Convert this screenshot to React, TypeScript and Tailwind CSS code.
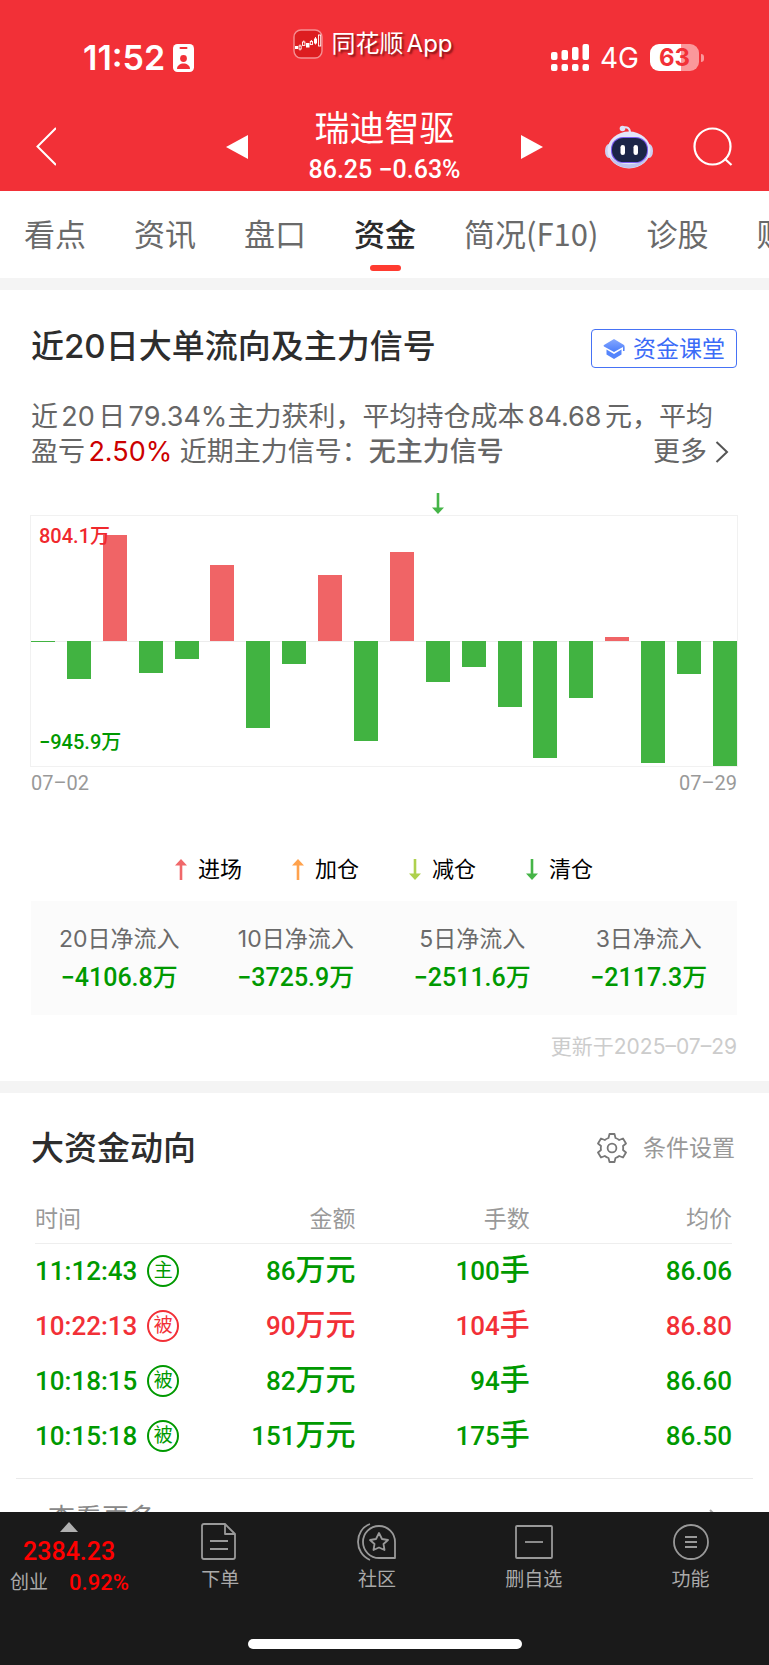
import type { ReactNode } from "react";

const tabs = ["看点", "资讯", "盘口", "资金", "简况(F10)", "诊股", "财务"];

const flujo = [
  -2, -288, 804.1, -243, -136, 575, -658, -174, 497, -760, 673, -314, -197,
  -496, -885, -428, 30, -923, -250, -945.9,
];
const maxFlujo = 945.9;

const leyenda = [
  { label: "进场", color: "#f0686a", up: true },
  { label: "加仓", color: "#ffa24d", up: true },
  { label: "减仓", color: "#aed14e", up: false },
  { label: "清仓", color: "#46b548", up: false },
];

const netos = [
  { label: "20日净流入", valor: "−4106.8万" },
  { label: "10日净流入", valor: "−3725.9万" },
  { label: "5日净流入", valor: "−2511.6万" },
  { label: "3日净流入", valor: "−2117.3万" },
];

const ordenes = [
  { hora: "11:12:43", tipo: "主", monto: "86", lotes: "100", precio: "86.06", sube: false },
  { hora: "10:22:13", tipo: "被", monto: "90", lotes: "104", precio: "86.80", sube: true },
  { hora: "10:18:15", tipo: "被", monto: "82", lotes: "94", precio: "86.60", sube: false },
  { hora: "10:15:18", tipo: "被", monto: "151", lotes: "175", precio: "86.50", sube: false },
];

function Flecha({ color, up }: { color: string; up: boolean }) {
  return (
    <svg viewBox="0 0 12 21" className={up ? "w-3 h-[21px]" : "w-3 h-[21px] rotate-180"} fill={color} aria-hidden="true">
      <path d="M6 0 L12 6.5 H7.3 V21 H4.7 V6.5 H0 Z" />
    </svg>
  );
}

function StatusBar() {
  return (
    <div className="flex items-start justify-between pl-[83px] pr-[65px] pt-7 h-[100px]">
      <div className="flex items-center gap-2 pt-[9px]">
        <span className="text-[34px] leading-[42px] font-semibold">11:52</span>
        <svg viewBox="0 0 21 28" className="w-[21px] h-7" aria-hidden="true">
          <rect width="21" height="28" rx="4.5" fill="#fff" />
          <rect x="6.5" y="3" width="8" height="2" rx="1" fill="#f23037" />
          <circle cx="10.5" cy="14.5" r="3.4" fill="#f23037" />
          <path d="M4 25 C4 17.6 17 17.6 17 25 Z" fill="#f23037" />
        </svg>
      </div>
      <div className="flex items-center gap-[9px]">
        <svg viewBox="0 0 30 30" className="w-[30px] h-[30px]" aria-hidden="true">
          <rect x="1" y="1" width="28" height="28" rx="7" fill="#dd1d20" stroke="#f58f92" strokeWidth="1.4" />
          <g fill="#fff">
            <rect x="2" y="17" width="3" height="3" />
            <rect x="13" y="14" width="3.5" height="4.5" />
            <rect x="21" y="9.5" width="3" height="5" />
          </g>
          <g fill="none" stroke="#fff" strokeWidth="0.9">
            <rect x="6" y="17" width="2.2" height="3" />
            <path d="M7 15.5 V17 M7 20 V21.5 M18.4 11 V12.5 M10.8 11.5 V13 M22.5 8 V15.5" />
            <rect x="9.5" y="13" width="2.4" height="3.4" />
            <rect x="17.3" y="12.4" width="2.2" height="3.2" />
            <rect x="25.5" y="6" width="2.2" height="11" />
          </g>
        </svg>
        <span className="text-2xl leading-8 [text-autospace:normal] [text-shadow:2px_2px_2px_rgba(60,0,0,0.6)]">同花顺App</span>
      </div>
      <div className="flex items-center gap-[11px] pt-[9px] h-[50px]">
        <svg viewBox="0 0 38 27" className="w-[38px] h-[27px]" fill="#fff" aria-hidden="true">
          <rect x="0" y="8" width="6.5" height="8" rx="2" />
          <rect x="10.5" y="6" width="6.5" height="10" rx="2" />
          <rect x="21" y="3" width="6.5" height="13" rx="2" />
          <rect x="31.5" y="0" width="6.5" height="16" rx="2" />
          <rect x="0" y="20" width="6.5" height="7" rx="2" />
          <rect x="10.5" y="20" width="6.5" height="7" rx="2" />
          <rect x="21" y="20" width="6.5" height="7" rx="2" />
          <rect x="31.5" y="20" width="6.5" height="7" rx="2" />
        </svg>
        <span className="text-[28px] leading-9">4G</span>
        <div className="flex items-center gap-[2px]">
          <div className="w-[49px] h-[27px] rounded-[9px] bg-linear-to-r from-white from-63% to-[#fa989b] to-63% text-center text-[#f23037] text-2xl leading-[27px] font-bold">
            63
          </div>
          <div className="w-[3px] h-[8px] rounded-r-full bg-[#fa989b]" />
        </div>
      </div>
    </div>
  );
}

function Robot() {
  return (
    <svg viewBox="0 0 48 44" className="w-12 h-11" aria-hidden="true">
      <path d="M17 3.2 C22 1 25 3 25 8" fill="none" stroke="#dfe2f8" strokeWidth="2" />
      <circle cx="17.5" cy="3.5" r="2.8" fill="#dfe2f8" />
      <ellipse cx="4" cy="26" rx="4" ry="7" fill="#cdd0f0" />
      <ellipse cx="44" cy="26" rx="4" ry="7" fill="#cdd0f0" />
      <ellipse cx="24" cy="25" rx="21.5" ry="18.5" fill="#e3e5fa" />
      <path d="M5 31 C10 47 38 47 43 31 C36 42 12 42 5 31 Z" fill="#bfc3ee" />
      <rect x="6" y="12" width="37" height="26" rx="12" fill="#7a5cf0" />
      <rect x="7" y="13" width="35" height="24" rx="11.5" fill="#1b2547" />
      <rect x="15.5" y="20" width="4.5" height="10" rx="2.2" fill="#fff" />
      <rect x="28.5" y="20" width="4.5" height="10" rx="2.2" fill="#fff" />
    </svg>
  );
}

function Cabecera() {
  return (
    <header className="bg-[#f23037] text-white">
      <StatusBar />
      <div className="grid grid-cols-[1fr_auto_1fr] items-center px-9 pt-[2px] h-[91px]">
        <button aria-label="返回" className="w-5 h-[39px]">
          <svg viewBox="0 0 20 39" className="w-5 h-[39px]" fill="none" stroke="#fff" strokeWidth="2">
            <path d="M20 1 L1.5 19.5 L20 38" />
          </svg>
        </button>
        <div className="flex items-center gap-[60px]">
          <button aria-label="上一只">
            <svg viewBox="0 0 22 24" className="w-[22px] h-6" fill="#fff"><path d="M22 0 V24 L0 12 Z" /></svg>
          </button>
          <div className="text-center">
            <h1 className="text-[35px] leading-[46px]">瑞迪智驱</h1>
            <p className="font-['Roboto','Noto_Sans_CJK_SC',sans-serif] text-[25px] leading-[38px] font-medium">86.25 −0.63%</p>
          </div>
          <button aria-label="下一只">
            <svg viewBox="0 0 22 24" className="w-[22px] h-6" fill="#fff"><path d="M0 0 V24 L22 12 Z" /></svg>
          </button>
        </div>
        <div className="flex items-center justify-end gap-10">
          <button aria-label="智能助手"><Robot /></button>
          <button aria-label="搜索">
            <svg viewBox="0 0 40 39" className="w-10 h-[39px]" fill="none" stroke="#fff" strokeWidth="2.2">
              <circle cx="19.5" cy="19.5" r="18" />
              <path d="M31.5 31.5 L38.5 38" />
            </svg>
          </button>
        </div>
      </div>
    </header>
  );
}

function Tabs() {
  return (
    <nav className="flex gap-12 pl-6 pt-5 h-[87px] overflow-hidden">
      {tabs.map((t) => (
        <button
          key={t}
          className={
            t === "资金"
              ? "shrink-0 flex flex-col items-center text-[31px] leading-[44px] font-medium text-[#2b2b2b]"
              : "shrink-0 flex flex-col items-center text-[31px] leading-[44px] text-[#6a6a6a]"
          }
        >
          <span className="font-['Noto_Sans_CJK_SC',sans-serif]">{t}</span>
          {t === "资金" && <span className="mt-[10px] w-[31px] h-[6px] rounded-full bg-[#ff3b30]" />}
        </button>
      ))}
    </nav>
  );
}

function Grafico() {
  return (
    <div className="mt-6">
      <div className="flex justify-between h-[23px]">
        {flujo.map((_, i) => (
          <div key={i} className="w-6 flex justify-center">
            {i === 11 && <Flecha color="#46b548" up={false} />}
          </div>
        ))}
      </div>
      <div className="relative h-[250px] outline outline-[#f1f1f1]">
        <div className="absolute inset-x-0 top-1/2 h-px bg-[#ececec]" />
        <div className="relative flex justify-between h-full">
          {flujo.map((v, i) => (
            <div key={i} className="w-6 grid grid-rows-2">
              <div className="flex items-end">
                {v > 0 && <div className="w-full bg-[#f06466]" style={{ height: `${(v / maxFlujo) * 100}%` }} />}
              </div>
              <div>
                {v < 0 && <div className="w-full bg-[#41b341]" style={{ height: `${(-v / maxFlujo) * 100}%` }} />}
              </div>
            </div>
          ))}
        </div>
        <span className="absolute left-2 top-[6px] font-['Roboto','Noto_Sans_CJK_SC',sans-serif] text-xl leading-7 font-medium text-[#f0282d]">804.1万</span>
        <span className="absolute left-2 bottom-[10px] font-['Roboto','Noto_Sans_CJK_SC',sans-serif] text-xl leading-7 font-medium text-[#090]">−945.9万</span>
      </div>
      <div className="flex justify-between mt-[3px] font-['Roboto',sans-serif] text-xl leading-7 text-[#999]">
        <span>07–02</span>
        <span>07–29</span>
      </div>
    </div>
  );
}

function FlujoPrincipal() {
  return (
    <section className="pl-[31px] pr-8 pt-[39px] pb-[18px] border-t-12 border-[#f4f4f4]">
      <div className="flex items-start justify-between h-[39px]">
        <h2 className="text-[33px] leading-[35px] font-medium text-[#2d2d2d]">近20日大单流向及主力信号</h2>
        <a href="#ketang" className="flex items-center gap-2 h-[39px] px-[11px] border border-[#4672f5] rounded text-[23px] leading-9 text-[#3b6bf7]">
          <svg viewBox="0 0 22 20" className="w-[22px] h-5" aria-hidden="true">
            <defs>
              <linearGradient id="gorro" x1="0" y1="0" x2="0" y2="1">
                <stop offset="0" stopColor="#86a8ff" />
                <stop offset="1" stopColor="#4a7dfb" />
              </linearGradient>
            </defs>
            <path fill="url(#gorro)" d="M11 0 L21 6 Q22 7 21.5 12 L20 12 L20 8 L11 13 L1 7.5 Q0 6.8 1 6 Z" />
            <path fill="#5585fc" d="M3.5 10.5 L11 15 L18.5 10.5 V15.5 L11 20 L3.5 15.5 Z" />
          </svg>
          资金课堂
        </a>
      </div>

      <div className="mt-[31px] text-[27px] leading-[35px] text-[#666] [text-autospace:normal]">
        <p>近20日79.34%主力获利，平均持仓成本84.68元，平均</p>
        <div className="flex justify-between">
          <p>
            盈亏<span className="text-[#c00]">2.50%</span> 近期主力信号：<b className="font-medium">无主力信号</b>
          </p>
          <a href="#more" className="flex items-center gap-2 pr-2">
            更多
            <svg viewBox="0 0 14 22" className="w-[14px] h-[22px]" fill="none" stroke="#555" strokeWidth="2" aria-hidden="true">
              <path d="M1.5 1 L12 11 L1.5 21" />
            </svg>
          </a>
        </div>
      </div>

      <Grafico />

      <div className="mt-[56px] flex justify-center gap-[50px]">
        {leyenda.map((l) => (
          <div key={l.label} className="flex items-center gap-[11px] text-[22px] leading-8 text-black">
            <Flecha color={l.color} up={l.up} />
            {l.label}
          </div>
        ))}
      </div>

      <div className="mt-4 grid grid-cols-4 h-[114px] pt-5 bg-[#fbfbfb] text-center">
        {netos.map((n) => (
          <div key={n.label}>
            <p className="text-[23px] leading-9 text-[#6a6a6a]">{n.label}</p>
            <p className="font-['Roboto','Noto_Sans_CJK_SC',sans-serif] text-[25px] leading-[42px] font-medium text-[#090]">{n.valor}</p>
          </div>
        ))}
      </div>

      <p className="mt-4 text-right text-[21px] leading-8 text-[#ccc]">更新于2025–07–29</p>
    </section>
  );
}

function Unidad({ children }: { children: ReactNode }) {
  return <span className="text-[30px]">{children}</span>;
}

function GrandesFondos() {
  return (
    <section className="border-t-12 border-[#f4f4f4] pt-[34px]">
      <div className="flex items-center justify-between pl-[31px] pr-[34px]">
        <h2 className="text-[33px] leading-[42px] font-medium text-[#2d2d2d]">大资金动向</h2>
        <button className="flex items-center gap-4 text-[23px] leading-8 text-[#999]">
          <svg viewBox="0 0 30 30" className="w-[30px] h-[30px]" fill="none" stroke="#777" strokeWidth="1.8" strokeLinejoin="round" aria-hidden="true">
            <path d="M12.500 1 H17.500 L18.500 5 Q20.600 5.700 22.200 7 L26 5.500 L29 10.500 L26 13 Q26.400 15 26 17 L29 19.500 L26 24.500 L22.200 23 Q20.600 24.300 18.500 25 L17.500 29 H12.500 L11.500 25 Q9.400 24.300 7.800 23 L4 24.500 L1 19.500 L4 17 Q3.600 15 4 13 L1 10.500 L4 5.500 L7.800 7 Q9.400 5.700 11.500 5 Z" />
            <circle cx="15" cy="15" r="4.4" />
          </svg>
          条件设置
        </button>
      </div>

      <div className="pl-[35px] pr-[37px] mt-[27px]">
        <table className="w-full table-fixed">
          <colgroup>
            <col className="w-[23%]" />
            <col className="w-[23%]" />
            <col className="w-[25%]" />
            <col />
          </colgroup>
          <thead>
            <tr className="h-[47px] border-b border-[#eee] text-[23px] leading-8 text-[#999]">
              <th className="font-normal text-left">时间</th>
              <th className="font-normal text-right">金额</th>
              <th className="font-normal text-right">手数</th>
              <th className="font-normal text-right">均价</th>
            </tr>
          </thead>
          <tbody>
            {ordenes.map((o) => (
              <tr
                key={o.hora}
                className={
                  o.sube
                    ? "h-[55px] font-['Roboto','Noto_Sans_CJK_SC',sans-serif] text-[26px] leading-10 font-medium text-[#f23037]"
                    : "h-[55px] font-['Roboto','Noto_Sans_CJK_SC',sans-serif] text-[26px] leading-10 font-medium text-[#090]"
                }
              >
                <td>
                  <div className="flex items-center gap-[10px]">
                    {o.hora}
                    <span className="shrink-0 flex items-center justify-center w-8 h-8 rounded-full border-2 border-current text-[19px] leading-7 font-normal">
                      {o.tipo}
                    </span>
                  </div>
                </td>
                <td className="text-right">{o.monto}<Unidad>万元</Unidad></td>
                <td className="text-right">{o.lotes}<Unidad>手</Unidad></td>
                <td className="text-right">{o.precio}</td>
              </tr>
            ))}
          </tbody>
        </table>
      </div>

      <a href="#all" className="mx-4 mt-[15px] flex items-center justify-between h-20 px-8 border-t border-[#eaeaea] text-[27px] leading-9 text-[#888]">
        查看更多
        <svg viewBox="0 0 12 20" className="w-3 h-5 text-[#aaa]" fill="none" stroke="currentColor" strokeWidth="2" aria-hidden="true">
          <path d="M1 1 L10 10 L1 19" />
        </svg>
      </a>
    </section>
  );
}

const iconos = [
  {
    label: "下单",
    dibujo: (
      <>
        <path d="M4 2 H25 L35 12 V35 Q35 37 33 37 H4 Q2 37 2 35 V4 Q2 2 4 2 Z M25 2 V12 H35" />
        <path d="M10 19 H28 M10 27 H28" />
      </>
    ),
  },
  {
    label: "社区",
    dibujo: (
      <>
        <path d="M13 2 C-3 8 -3 31 13 38" />
        <path d="M22 4 A16 16 0 1 0 22 36 H38 V20 A16 16 0 0 0 22 4 Z" />
        <path d="M22 11 L25 17 L31 18 L26.5 22 L27.5 28 L22 25.5 L16.5 28 L17.5 22 L13 18 L19 17 Z" />
      </>
    ),
  },
  {
    label: "删自选",
    dibujo: (
      <>
        <rect x="2" y="4" width="36" height="32" rx="1" />
        <path d="M11 20 H29" />
      </>
    ),
  },
  {
    label: "功能",
    dibujo: (
      <>
        <circle cx="20" cy="20" r="17" />
        <path d="M14 15 H26 M14 20 H26 M14 25 H26" />
      </>
    ),
  },
];

function BarraInferior() {
  return (
    <footer className="shrink-0 bg-[#1a1a1a] text-[#aaa]">
      <div className="flex h-[127px] pt-[10px]">
        <button className="w-[142px] flex flex-col items-start pl-[10px]">
          <svg viewBox="0 0 18 10" className="ml-[50px] w-[18px] h-[10px]" fill="#b0b0b0" aria-hidden="true">
            <path d="M9 0 L18 10 H0 Z" />
          </svg>
          <span className="ml-[13px] mt-1 font-['Roboto',sans-serif] text-[25px] leading-8 font-medium text-[#f00]">2384.23</span>
          <span className="flex items-center gap-[21px] text-[19px] leading-[30px]">
            创业
            <span className="font-['Roboto',sans-serif] text-[22px] font-medium text-[#f00]">0.92%</span>
          </span>
        </button>
        {iconos.map((i) => (
          <button key={i.label} className="flex-1 flex flex-col items-center text-[19px] leading-7">
            <svg viewBox="0 0 40 40" className="w-10 h-10" fill="none" stroke="#999" strokeWidth="1.8" strokeLinejoin="round" aria-hidden="true">
              {i.dibujo}
            </svg>
            <span className="mt-1">{i.label}</span>
          </button>
        ))}
      </div>
      <div className="h-[26px]">
        <div className="mx-auto w-[274px] h-[10px] rounded-full bg-white" />
      </div>
    </footer>
  );
}

export default function App() {
  return (
    <div className="flex flex-col h-screen bg-white font-['Inter','Noto_Sans_CJK_SC',sans-serif]">
      <Cabecera />
      <main className="flex-1 min-h-0 overflow-y-auto [scrollbar-width:none]">
        <Tabs />
        <FlujoPrincipal />
        <GrandesFondos />
      </main>
      <BarraInferior />
    </div>
  );
}
